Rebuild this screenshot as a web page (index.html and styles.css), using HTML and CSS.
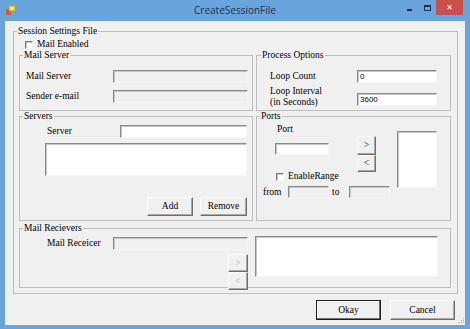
FILE: index.html
```html
<!DOCTYPE html>
<html lang="en">
<head>
  <meta charset="UTF-8">
  <meta name="viewport" content="width=device-width, initial-scale=1.0">
  <title>CreateSessionFile</title>
  <link rel="stylesheet" href="styles.css">
</head>
<body>
  <div class="window">
    <div class="titlebar">
      <svg class="app-icon" width="9" height="9" viewBox="0 0 9 9">
        <rect x="0" y="3" width="5" height="6" fill="#d9554a"/>
        <rect x="3" y="0" width="6" height="5" fill="#f1b93a"/>
        <rect x="4" y="1" width="4" height="3" fill="#fbe38a"/>
      </svg>
      <div class="title">CreateSessionFile</div>
      <div class="caption">
        <span class="cap-min"></span>
        <span class="cap-max"></span>
        <span class="cap-close">✕</span>
      </div>
    </div>

    <div class="client">
      <fieldset class="group main-group">
        <legend>Session Settings File</legend>
        <div class="check main-check"><span class="box"></span>Mail Enabled</div>

        <div class="band">
          <fieldset class="group mail-server">
            <legend>Mail Server</legend>
            <div class="row"><span class="lbl">Mail Server</span><span class="tb off"></span></div>
            <div class="row"><span class="lbl">Sender e-mail</span><span class="tb off"></span></div>
          </fieldset>
          <fieldset class="group process">
            <legend>Process Options</legend>
            <div class="row"><span class="lbl">Loop Count</span><span class="tb">0</span></div>
            <div class="row two-line"><span class="lbl">Loop Interval<br>(in Seconds)</span><span class="tb">3600</span></div>
          </fieldset>
        </div>

        <div class="band">
          <fieldset class="group servers">
            <legend>Servers</legend>
            <div class="row server-row"><span class="lbl">Server</span><span class="tb"></span></div>
            <div class="list server-list"></div>
            <div class="btn-row">
              <button class="btn add-btn">Add</button>
              <button class="btn remove-btn">Remove</button>
            </div>
          </fieldset>
          <fieldset class="group ports">
            <legend>Ports</legend>
            <div class="ports-body">
              <div class="ports-left">
                <div class="ports-top">
                  <div class="port-stack">
                    <div class="port-lbl">Port</div>
                    <span class="tb port-tb"></span>
                    <div class="check"><span class="box"></span>EnableRange</div>
                  </div>
                  <div class="arrows">
                    <button class="btn arrow">&gt;</button>
                    <button class="btn arrow">&lt;</button>
                  </div>
                </div>
                <div class="range-row">
                  <span class="from-lbl">from</span>
                  <span class="tb off range-tb"></span>
                  <span class="to-lbl">to</span>
                  <span class="tb off range-tb"></span>
                </div>
              </div>
              <div class="list port-list"></div>
            </div>
          </fieldset>
        </div>

        <fieldset class="group receivers">
          <legend>Mail Recievers</legend>
          <div class="recv-body">
            <div class="recv-left">
              <div class="row"><span class="lbl">Mail Receicer</span><span class="tb off"></span></div>
              <div class="arrows recv-arrows">
                <button class="btn arrow" disabled>&gt;</button>
                <button class="btn arrow" disabled>&lt;</button>
              </div>
            </div>
            <div class="list recv-list"></div>
          </div>
        </fieldset>
      </fieldset>

      <div class="footer">
        <button class="btn default">Okay</button>
        <button class="btn">Cancel</button>
        <svg class="grip" width="8" height="8" viewBox="0 0 8 8">
          <g fill="#a9a9a9">
            <rect x="6" y="1" width="1" height="1"/>
            <rect x="4" y="3" width="1" height="1"/>
            <rect x="6" y="3" width="1" height="1"/>
            <rect x="2" y="5" width="1" height="1"/>
            <rect x="4" y="5" width="1" height="1"/>
            <rect x="6" y="5" width="1" height="1"/>
          </g>
        </svg>
      </div>
    </div>
  </div>
</body>
</html>
```

FILE: styles.css
```css
body {
  margin: 0;
}
.window {
  width: 470px;
  height: 329px;
  background: #6aa4dd;
  display: flex;
  flex-direction: column;
  font-family: 'Liberation Serif', serif;
  font-size: 9.5px;
  line-height: 11px;
  color: #000;
}

/* title bar */
.titlebar {
  height: 21px;
  display: grid;
  grid-template-columns: 1fr auto 1fr;
  align-items: center;
}
.app-icon {
  margin-left: 6px;
}
.title {
  font-family: 'Open Sans', sans-serif;
  font-size: 10px;
  color: #1b3350;
}
.caption {
  justify-self: end;
  align-self: start;
  display: flex;
  align-items: flex-start;
  margin-right: 7px;
}
.cap-min {
  width: 5px;
  height: 2px;
  background: #1b3350;
  margin-top: 9px;
}
.cap-max {
  width: 7px;
  height: 6px;
  box-sizing: border-box;
  border: 1px solid #1b3350;
  border-top-width: 2px;
  margin: 5px 5px 0 12px;
}
.cap-close {
  width: 27px;
  height: 15px;
  background: #c9504b;
  color: #fff;
  font-family: 'DejaVu Sans', sans-serif;
  font-size: 8px;
  line-height: 15px;
  text-align: center;
}

/* client area */
.client {
  flex: 1;
  margin: 0 5px 4px;
  background: #f0f0f0;
  display: flex;
  flex-direction: column;
  padding-top: 5px;
}
.group {
  box-sizing: border-box;
  margin: 0;
  padding: 0;
  min-width: 0;
  border: 1px solid #bdbdbd;
}
.group legend {
  padding: 0 1px;
  line-height: 11px;
}
.main-group {
  margin: 0 7px 0 8px;
  padding: 0 6px 5px 5px;
}
.main-group > legend {
  margin-left: -2px;
}

.check {
  display: flex;
  align-items: center;
  height: 11px;
  white-space: nowrap;
}
.box {
  flex: none;
  width: 8px;
  height: 8px;
  box-sizing: border-box;
  border: 1px solid;
  border-color: #7a7a7a #fff #fff #7a7a7a;
  background: #fff;
  box-shadow: inset 1px 1px 0 #c8c8c8;
  margin-right: 4px;
}
.main-check {
  margin: 2px 0 0 6px;
}

.band {
  display: flex;
  gap: 3px;
}
.row {
  display: flex;
  align-items: center;
}
.row + .row {
  margin-top: 7px;
}
.lbl {
  flex: none;
  white-space: nowrap;
}

.tb, .list {
  flex: none;
  box-sizing: border-box;
  background: #fff;
  border: 1px solid;
  border-color: #8a8a8a #f6f6f6 #f6f6f6 #8a8a8a;
  box-shadow: inset 1px 1px 0 #c6c6c6;
}
.tb {
  height: 13px;
  font-family: 'Liberation Sans', sans-serif;
  font-size: 8px;
  line-height: 11px;
  padding-left: 2px;
}
.tb.off {
  background: #f0f0f0;
}

/* mail server / process options */
.mail-server {
  width: 234px;
  padding: 9px 4px 7px 6px;
}
.mail-server > legend {
  margin-left: -3px;
}
.mail-server .lbl {
  width: 87px;
}
.mail-server .tb {
  width: 135px;
}
.process {
  width: 195px;
  padding: 9px 0 2px 13px;
}
.process > legend {
  margin-left: -9px;
}
.process .lbl {
  width: 87px;
}
.process .tb {
  width: 80px;
}
.process .two-line {
  margin-top: 3px;
}
.two-line .tb {
  margin-top: 4px;
}

/* servers */
.servers {
  width: 234px;
  padding: 0 5px 4px 25px;
}
.servers > legend {
  margin-left: -22px;
}
.server-row {
  margin: 3px 0 0 2px;
}
.server-row .lbl {
  width: 73px;
}
.server-row .tb {
  width: 127px;
}
.server-list {
  width: 202px;
  height: 33px;
  margin-top: 5px;
}
.btn-row {
  display: flex;
  justify-content: flex-end;
  gap: 7px;
  margin-top: 21px;
}
.add-btn {
  width: 46px;
  height: 19px;
}
.remove-btn {
  width: 47px;
  height: 19px;
}

.btn {
  box-sizing: border-box;
  display: flex;
  align-items: center;
  justify-content: center;
  padding: 0;
  font: inherit;
  color: #000;
  background: #f0f0f0;
  border: 1px solid;
  border-color: #fff #6e6e6e #6e6e6e #fff;
  box-shadow: inset -1px -1px 0 #a8a8a8;
}
.btn:disabled {
  color: #a8a8a8;
}

/* ports */
.ports {
  width: 195px;
  padding: 0 0 0 6px;
}
.ports > legend {
  margin-left: -3px;
}
.ports-body {
  display: flex;
  align-items: flex-start;
}
.ports-left {
  width: 127px;
}
.ports-top {
  display: flex;
  align-items: flex-start;
}
.port-stack {
  width: 54px;
  margin-left: 12px;
  padding-top: 2px;
}
.port-lbl {
  margin-left: 2px;
}
.port-tb {
  display: block;
  width: 54px;
  height: 12px;
  margin-top: 8px;
}
.ports .check {
  margin: 16px 0 0 1px;
}
.arrows {
  display: flex;
  flex-direction: column;
}
.ports-top .arrows {
  margin: 14px 0 0 28px;
}
.arrow {
  width: 19px;
  height: 19px;
}
.arrow + .arrow {
  height: 17px;
}
.range-row {
  display: flex;
  align-items: center;
  margin-top: 4px;
}
.from-lbl {
  width: 25px;
}
.to-lbl {
  width: 17px;
  margin-left: 3px;
}
.range-tb {
  width: 41px;
  height: 12px;
}
.port-list {
  width: 40px;
  height: 57px;
  margin: 9px 0 0 7px;
}

/* mail receivers */
.receivers {
  padding: 0 0 0 27px;
  margin-top: 2px;
}
.receivers > legend {
  margin-left: -24px;
}
.recv-body {
  display: flex;
  align-items: flex-start;
}
.recv-left {
  width: 201px;
}
.recv-left .row {
  margin-top: 3px;
}
.recv-left .lbl {
  width: 66px;
}
.recv-left .tb {
  width: 135px;
}
.recv-arrows {
  align-items: flex-end;
  margin: 4px 0 -3px;
}
.recv-arrows .arrow {
  width: 20px;
  height: 18px;
}
.recv-list {
  width: 183px;
  height: 41px;
  margin: 2px 0 0 7px;
}

/* footer */
.footer {
  flex: 1;
  display: flex;
  justify-content: flex-end;
  align-items: flex-start;
  padding-top: 6px;
}
.footer .btn {
  width: 65px;
  height: 20px;
}
.footer .default {
  margin-right: 9px;
  border-color: #1e1e1e;
  box-shadow: inset -1px -1px 0 #6e6e6e, inset 1px 1px 0 #fff;
}
.grip {
  align-self: flex-end;
  margin-left: 2px;
}
```
